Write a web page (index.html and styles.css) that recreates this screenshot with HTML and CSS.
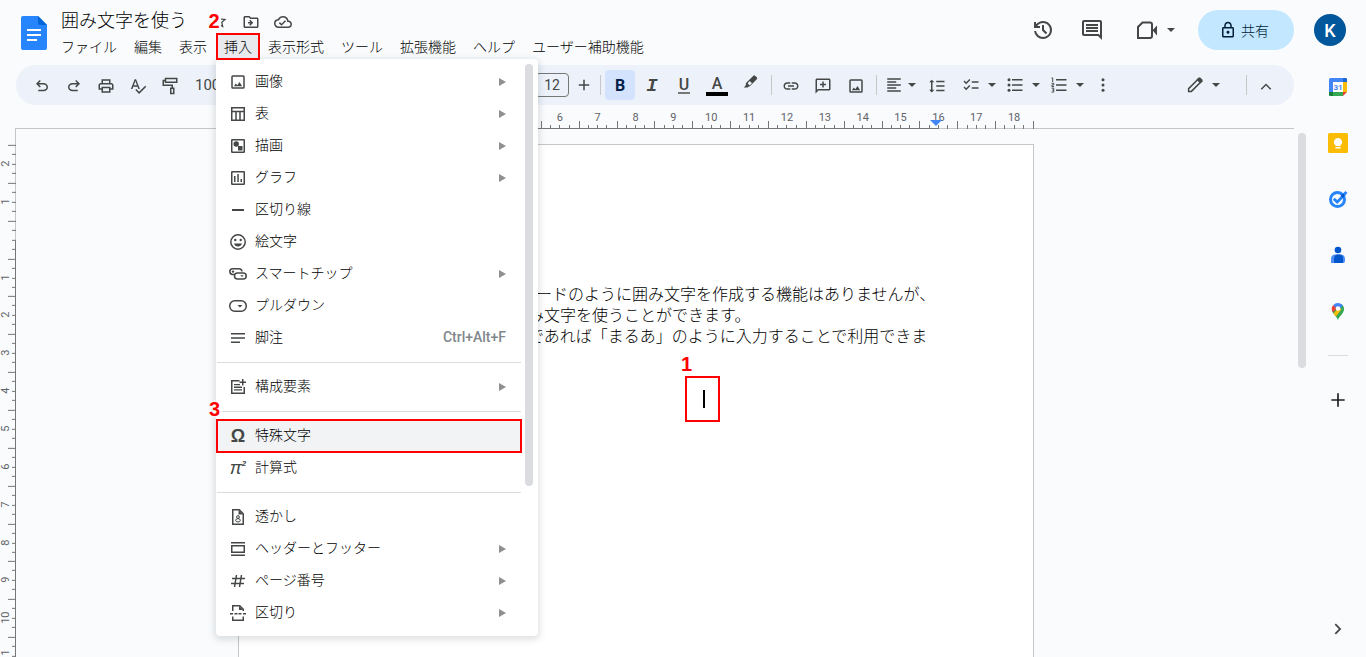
FILE: index.html
```html
<!DOCTYPE html>
<html lang="ja">
<head>
<meta charset="utf-8">
<meta name="viewport" content="width=device-width, initial-scale=1">
<title>囲み文字を使う</title>
<link rel="stylesheet" href="styles.css">
</head>
<body>
<svg class="sprite" aria-hidden="true">
  <symbol id="i-star" viewBox="0 0 24 24"><path d="M22 9.24l-7.19-.62L12 2 9.19 8.63 2 9.24l5.46 4.73L5.82 21 12 17.27 18.18 21l-1.63-7.03L22 9.24zM12 15.4l-3.76 2.27 1-4.28-3.32-2.88 4.38-.38L12 6.1l1.71 4.04 4.38.38-3.32 2.88 1 4.28L12 15.4z"/></symbol>
  <symbol id="i-move" viewBox="0 0 24 24"><path d="M20 6h-8l-2-2H4c-1.1 0-2 .9-2 2v12c0 1.1.9 2 2 2h16c1.1 0 2-.9 2-2V8c0-1.1-.9-2-2-2zm0 12H4V6h5.17l2 2H20v10zm-8.84-4H8v-2h3.16l-1.58-1.59L11 9l4 4-4 4-1.41-1.41L11.16 14z"/></symbol>
  <symbol id="i-cloud" viewBox="0 0 24 24"><path d="M19.35 10.04A7.49 7.49 0 0 0 12 4C9.11 4 6.6 5.64 5.35 8.04A5.994 5.994 0 0 0 0 14c0 3.31 2.69 6 6 6h13c2.76 0 5-2.24 5-5 0-2.64-2.05-4.78-4.65-4.96zM19 18H6c-2.21 0-4-1.79-4-4 0-2.05 1.53-3.76 3.56-3.97l1.07-.11.5-.95A5.469 5.469 0 0 1 12 6c2.62 0 4.88 1.86 5.39 4.43l.3 1.5 1.53.11A2.98 2.98 0 0 1 22 15c0 1.65-1.35 3-3 3zm-9-3.82l-2.09-2.09L6.5 13.5 10 17l6.01-6.01-1.41-1.41z"/></symbol>
  <symbol id="i-history" viewBox="0 -960 960 960"><path d="M480-120q-138 0-240.5-91.5T122-440h82q14 104 92.5 172T480-200q117 0 198.500-81.500T760-480q0-117-81.500-198.500T480-760q-69 0-129 32t-101 88h110v80H120v-240h80v94q51-64 124.500-99T480-840q75 0 140.500 28.500t114 77q48.500 48.500 77 114T840-480q0 75-28.500 140.500t-77 114q-48.500 48.500-114 77T480-120Zm112-192L440-464v-216h80v184l128 128-56 56Z"/></symbol>
  <symbol id="i-comment" viewBox="0 0 24 24"><path d="M21.990 4c0-1.100-.89-2-1.990-2H4c-1.100 0-2 .9-2 2v12c0 1.100.9 2 2 2h14l4 4-.01-18zM20 4v13.170L18.830 16H4V4h16zM6 12h12v2H6zm0-3h12v2H6zm0-3h12v2H6z"/></symbol>
  <symbol id="i-video" viewBox="0 0 24 24"><path fill="none" stroke="currentColor" stroke-width="2" d="M3 20V9l4.500-4.500H15a2 2 0 0 1 2 2V18a2 2 0 0 1-2 2z"/><path d="M17.500 12.200 22 7.500v10z"/></symbol>
  <symbol id="i-lock" viewBox="0 0 24 24"><path d="M18 8h-1V6c0-2.760-2.240-5-5-5S7 3.240 7 6v2H6c-1.100 0-2 .9-2 2v10c0 1.100.9 2 2 2h12c1.100 0 2-.9 2-2V10c0-1.100-.9-2-2-2zM9 6c0-1.660 1.340-3 3-3s3 1.340 3 3v2H9V6zm9 14H6V10h12v10zm-6-3c1.100 0 2-.9 2-2s-.9-2-2-2-2 .9-2 2 .9 2 2 2z"/></symbol>
  <symbol id="i-undo" viewBox="0 -960 960 960"><path d="M280-200v-80h284q63 0 109.500-40T720-420q0-60-46.500-100T564-560H312l104 104-56 56-200-200 200-200 56 56-104 104h252q97 0 166.500 63T800-420q0 94-69.500 157T564-200H280Z"/></symbol>
  <symbol id="i-print" viewBox="0 0 24 24"><path d="M19 8h-1V3H6v5H5c-1.660 0-3 1.340-3 3v6h4v4h12v-4h4v-6c0-1.660-1.340-3-3-3zM8 5h8v3H8V5zm8 12v2H8v-4h8v2zm2-2v-2H6v2H4v-4c0-.55.45-1 1-1h14c.55 0 1 .45 1 1v4h-2z"/></symbol>
  <symbol id="i-spell" viewBox="0 0 24 24"><path d="M12.450 16h2.090L9.430 3H7.570L2.460 16h2.090l1.120-3h5.640l1.140 3zm-6.020-5L8.500 5.480 10.570 11H6.430zm15.160.59l-8.090 8.090L9.830 16l-1.410 1.410 5.090 5.090L23 13l-1.410-1.410z"/></symbol>
  <symbol id="i-paint" viewBox="0 0 24 24"><g fill="none" stroke="currentColor" stroke-width="2"><rect x="6" y="2" width="15" height="5"/><path d="M6 4.500H3V11h12v4"/><rect x="13" y="15" width="4" height="7"/></g></symbol>
  <symbol id="i-plus" viewBox="0 0 24 24"><path d="M19 13h-6v6h-2v-6H5v-2h6V5h2v6h6z"/></symbol>
  <symbol id="i-marker" viewBox="0 0 24 24"><path fill-rule="evenodd" d="M19 2.500a2 2 0 0 0-2.800 0L7 11.500a2 2 0 0 0-.4 2.200l-.6 2L3.500 18H9l1-1.200a2 2 0 0 0 1.800-.6l9.200-9.100a2 2 0 0 0 0-2.800zM8.800 12.400l3-3 2.800 2.800-3.200 3z"/></symbol>
  <symbol id="i-link" viewBox="0 0 24 24"><path d="M3.900 12c0-1.710 1.390-3.100 3.100-3.100h4V7H7c-2.760 0-5 2.240-5 5s2.240 5 5 5h4v-1.900H7c-1.710 0-3.100-1.390-3.100-3.100zM8 13h8v-2H8v2zm9-6h-4v1.900h4c1.710 0 3.100 1.390 3.100 3.100s-1.390 3.100-3.100 3.100h-4V17h4c2.760 0 5-2.240 5-5s-2.240-5-5-5z"/></symbol>
  <symbol id="i-addcomment" viewBox="0 0 24 24"><path fill-rule="evenodd" d="M22 4c0-1.100-.9-2-2-2H4c-1.100 0-2 .9-2 2v18l4-4h14c1.100 0 2-.9 2-2V4zM4 4h16v12H5.170L4 17.170zM11 6h2v3h3v2h-3v3h-2v-3H8V9h3z"/></symbol>
  <symbol id="i-image" viewBox="0 0 24 24"><path fill-rule="evenodd" d="M5 3h14a2 2 0 0 1 2 2v14a2 2 0 0 1-2 2H5a2 2 0 0 1-2-2V5a2 2 0 0 1 2-2zm0 2v14h14V5zM6.500 17.500l2.500-3.500 2 2.200 3-4.200 3.500 5.500z"/></symbol>
  <symbol id="i-align" viewBox="0 0 24 24"><path d="M15 15H3v2h12v-2zm0-8H3v2h12V7zM3 13h18v-2H3v2zm0 8h18v-2H3v2zM3 3v2h18V3H3z"/></symbol>
  <symbol id="i-spacing" viewBox="0 0 24 24"><path d="M6 7h2.500L5 3.500 1.500 7H4v10H1.500L5 20.500 8.500 17H6V7zm5-2v2h11V5H11zm0 14h11v-2H11v2zm0-6h11v-2H11v2z"/></symbol>
  <symbol id="i-check" viewBox="0 0 24 24"><path d="M22 7h-9v2h9V7zm0 8h-9v2h9v-2zM5.540 11L2 7.460l1.410-1.410 2.120 2.120 4.240-4.240 1.410 1.410L5.540 11zm0 8L2 15.460l1.410-1.410 2.120 2.120 4.240-4.240 1.410 1.410L5.540 19z"/></symbol>
  <symbol id="i-bullets" viewBox="0 0 24 24"><circle cx="4" cy="5" r="2"/><circle cx="4" cy="12" r="2"/><circle cx="4" cy="19" r="2"/><path d="M8 4h14v2H8zM8 11h14v2H8zM8 18h14v2H8z"/></symbol>
  <symbol id="i-numbers" viewBox="0 0 24 24"><path fill="none" stroke="currentColor" stroke-width="1.300" d="M2 2.600h1.600V8M2 9.700h3v2.200H2.600v2.200H5.400M2 16.200h3v5.200H2M3 18.800h2"/><path d="M8 4h14v2H8zM8 11h14v2H8zM8 18h14v2H8z"/></symbol>
  <symbol id="i-more" viewBox="0 0 24 24"><circle cx="12" cy="5" r="2"/><circle cx="12" cy="12" r="2"/><circle cx="12" cy="19" r="2"/></symbol>
  <symbol id="i-pencil" viewBox="0 0 24 24"><path fill="none" stroke="currentColor" stroke-width="2" d="M3.500 20.500v-3.700L16.700 3.600a1 1 0 0 1 1.400 0l2.300 2.300a1 1 0 0 1 0 1.400L7.200 20.500z"/><path d="M14 5l3-3h2l3 3v2l-3 3z"/></symbol>
  <symbol id="i-up" viewBox="0 0 24 24"><path d="M5 15.500 12 8.500l7 7-1.400 1.400L12 11.300l-5.600 5.600z"/></symbol>
  <symbol id="i-right" viewBox="0 0 24 24"><path d="M9.500 5.500 16 12l-6.500 6.500L8 17l5-5-5-5z"/></symbol>
  <symbol id="i-caret" viewBox="0 0 8 4"><path d="M0 0h8L4 4z"/></symbol>
  <symbol id="i-table" viewBox="0 0 18 18"><path fill="none" stroke="currentColor" stroke-width="1.500" d="M2.750 2.750h12.500v12.500H2.750zM2.750 6.500h12.500M7 6.500v8.500M11 6.500v8.500"/></symbol>
  <symbol id="i-drawing" viewBox="0 0 18 18"><rect x="2.750" y="2.750" width="12.500" height="12.500" rx=".5" fill="none" stroke="currentColor" stroke-width="1.500"/><circle cx="7.200" cy="7" r="2.700"/><path d="M9 9h4.500v4.500H9z"/></symbol>
  <symbol id="i-chart" viewBox="0 0 18 18"><rect x="2.750" y="2.750" width="12.500" height="12.500" rx=".5" fill="none" stroke="currentColor" stroke-width="1.500"/><path d="M5 7h1.500v6H5zM8.300 5h1.500v8H8.300zM11.500 10H13v3h-1.500z"/></symbol>
  <symbol id="i-rule" viewBox="0 0 18 18"><path d="M3 8h12v2H3z"/></symbol>
  <symbol id="i-emoji" viewBox="0 0 18 18"><circle cx="9" cy="9" r="7.200" fill="none" stroke="currentColor" stroke-width="1.500"/><circle cx="6.300" cy="7" r="1.200"/><circle cx="11.700" cy="7" r="1.200"/><path d="M5 10.500h8a4.200 4.200 0 0 1-8 0z"/></symbol>
  <symbol id="i-chip" viewBox="0 0 18 18"><g fill="none" stroke="currentColor" stroke-width="1.500"><path d="M6 9.500H3.700a2.900 2.900 0 0 1 0-5.800H10a2.900 2.900 0 0 1 2.900 2.900"/><rect x="5.500" y="8" width="11.700" height="6" rx="3"/></g><circle cx="4" cy="6.600" r="1.200"/><path d="M11.300 10.200h3.400L13 12z"/></symbol>
  <symbol id="i-dropdown" viewBox="0 0 18 18"><rect x=".75" y="3.750" width="16.500" height="10.500" rx="5" fill="none" stroke="currentColor" stroke-width="1.500"/><path d="M8.500 8h5L11 10.500z"/></symbol>
  <symbol id="i-notes" viewBox="0 0 18 18"><path d="M2 4h14v1.500H2zM2 8.300h14v1.500H2zM2 12.500h9V14H2z"/></symbol>
  <symbol id="i-blocks" viewBox="0 0 18 18"><path fill="none" stroke="currentColor" stroke-width="1.500" d="M10.500 2.750H2.750v12.500h12.500V9"/><path d="M5 6h6v1.300H5zM5 8.600h8v1.300H5zM5 11.200h8v1.300H5zM13 1h1.500v2.500H17V5h-2.500v2.500H13V5h-2.500V3.500H13z"/></symbol>
  <symbol id="i-watermark" viewBox="0 0 18 18"><path fill="none" stroke="currentColor" stroke-width="1.500" d="M3.750 1.750h6.500l4 4v10.500H3.750z"/><path d="M9.500 2v4.500H14z"/><circle cx="9" cy="9" r="1.400" fill="none" stroke="currentColor"/><ellipse cx="9" cy="12.300" rx="2.300" ry="1.700" fill="none" stroke="currentColor"/></symbol>
  <symbol id="i-header" viewBox="0 0 18 18"><path d="M2 2h14v1.500H2zM2 14.500h14V16H2z"/><path fill="none" stroke="currentColor" stroke-width="1.500" d="M2.750 5.750h12.500v6.500H2.750z"/></symbol>
  <symbol id="i-hash" viewBox="0 0 18 18"><path fill="none" stroke="currentColor" stroke-width="1.500" d="M3 6.500h13M2 11.500h13M7.500 3l-2 12M12.500 3l-2 12"/></symbol>
  <symbol id="i-break" viewBox="0 0 18 18"><path fill="none" stroke="currentColor" stroke-width="1.500" d="M3.750 7V1.750h7l3.500 3.500V7M3.750 12.500v3.750h10.500V12.500M1 9.750h3M5.500 9.750h3M9.500 9.750h3M14 9.750h3"/><path d="M10 2v4h4z"/></symbol>
</svg>

<div class="app">
  <header class="header">
    <a class="logo" href="#" aria-label="ドキュメント ホーム">
      <svg width="26" height="34" viewBox="0 0 26 34"><path fill="#2684fc" d="M2 0h15l9 9v23a2 2 0 0 1-2 2H2a2 2 0 0 1-2-2V2a2 2 0 0 1 2-2z"/><path fill="#0066da" d="M17 0l9 9h-7a2 2 0 0 1-2-2z"/><path fill="#fff" d="M6 13h14v2H6zM6 18h14v2H6zM6 23h10v2H6z"/></svg>
    </a>
    <div class="heading">
      <div class="title-row">
        <h1 class="title">囲み文字を使う</h1>
        <button class="title-btn star" aria-label="スターを付ける"><svg class="ic"><use href="#i-star"/></svg><span class="callout callout-2">2</span></button>
        <button class="title-btn" aria-label="移動"><svg class="ic"><use href="#i-move"/></svg></button>
        <button class="title-btn" aria-label="保存済み"><svg class="ic"><use href="#i-cloud"/></svg></button>
      </div>
      <nav class="menubar">
        <button class="menubar-btn">ファイル</button>
        <button class="menubar-btn">編集</button>
        <button class="menubar-btn">表示</button>
        <div class="menu-host">
          <button class="menubar-btn open" aria-expanded="true">挿入</button>
          <div class="menu">
            <div class="menu-list" role="menu">
              <button class="item" role="menuitem"><svg class="ic"><use href="#i-image"/></svg><span class="label">画像</span><span class="arrow"></span></button>
              <button class="item" role="menuitem"><svg class="ic"><use href="#i-table"/></svg><span class="label">表</span><span class="arrow"></span></button>
              <button class="item" role="menuitem"><svg class="ic"><use href="#i-drawing"/></svg><span class="label">描画</span><span class="arrow"></span></button>
              <button class="item" role="menuitem"><svg class="ic"><use href="#i-chart"/></svg><span class="label">グラフ</span><span class="arrow"></span></button>
              <button class="item" role="menuitem"><svg class="ic"><use href="#i-rule"/></svg><span class="label">区切り線</span></button>
              <button class="item" role="menuitem"><svg class="ic"><use href="#i-emoji"/></svg><span class="label">絵文字</span></button>
              <button class="item" role="menuitem"><svg class="ic"><use href="#i-chip"/></svg><span class="label">スマートチップ</span><span class="arrow"></span></button>
              <button class="item" role="menuitem"><svg class="ic"><use href="#i-dropdown"/></svg><span class="label">プルダウン</span></button>
              <button class="item" role="menuitem"><svg class="ic"><use href="#i-notes"/></svg><span class="label">脚注</span><span class="shortcut">Ctrl+Alt+F</span></button>
              <hr class="rule">
              <button class="item" role="menuitem"><svg class="ic"><use href="#i-blocks"/></svg><span class="label">構成要素</span><span class="arrow"></span></button>
              <hr class="rule">
              <button class="item marked" role="menuitem"><span class="sym omega">Ω</span><span class="label">特殊文字</span><span class="callout callout-3">3</span></button>
              <button class="item" role="menuitem"><span class="sym pi">π<sup>2</sup></span><span class="label">計算式</span></button>
              <hr class="rule">
              <button class="item" role="menuitem"><svg class="ic"><use href="#i-watermark"/></svg><span class="label">透かし</span></button>
              <button class="item" role="menuitem"><svg class="ic"><use href="#i-header"/></svg><span class="label">ヘッダーとフッター</span><span class="arrow"></span></button>
              <button class="item" role="menuitem"><svg class="ic"><use href="#i-hash"/></svg><span class="label">ページ番号</span><span class="arrow"></span></button>
              <button class="item" role="menuitem"><svg class="ic"><use href="#i-break"/></svg><span class="label">区切り</span><span class="arrow"></span></button>
            </div>
            <div class="menu-scroll"></div>
          </div>
        </div>
        <button class="menubar-btn">表示形式</button>
        <button class="menubar-btn">ツール</button>
        <button class="menubar-btn">拡張機能</button>
        <button class="menubar-btn">ヘルプ</button>
        <button class="menubar-btn">ユーザー補助機能</button>
      </nav>
    </div>
    <div class="actions">
      <button class="action" aria-label="変更履歴"><svg class="ic big"><use href="#i-history"/></svg></button>
      <button class="action" aria-label="コメント"><svg class="ic big"><use href="#i-comment"/></svg></button>
      <button class="action" aria-label="会議"><svg class="ic big"><use href="#i-video"/></svg><svg class="caret"><use href="#i-caret"/></svg></button>
      <button class="share"><svg class="ic"><use href="#i-lock"/></svg>共有</button>
      <button class="avatar">K</button>
    </div>
  </header>

  <main class="editor">
    <div class="toolbar" role="toolbar">
      <button class="tool" aria-label="元に戻す"><svg class="ic"><use href="#i-undo"/></svg></button>
      <button class="tool" aria-label="やり直し"><svg class="ic flip"><use href="#i-undo"/></svg></button>
      <button class="tool" aria-label="印刷"><svg class="ic"><use href="#i-print"/></svg></button>
      <button class="tool" aria-label="スペルチェック"><svg class="ic"><use href="#i-spell"/></svg></button>
      <button class="tool" aria-label="書式の貼り付け"><svg class="ic"><use href="#i-paint"/></svg></button>
      <button class="zoom-level">100%</button>
      <input class="font-size" type="text" value="12" aria-label="フォントサイズ">
      <button class="tool narrow" aria-label="拡大"><svg class="ic"><use href="#i-plus"/></svg></button>
      <span class="sep"></span>
      <button class="tool glyph active" aria-label="太字"><b>B</b></button>
      <button class="tool glyph" aria-label="斜体"><i>I</i></button>
      <button class="tool glyph" aria-label="下線"><span class="underlined">U</span></button>
      <button class="tool wide glyph" aria-label="テキストの色"><span class="colored">A</span></button>
      <button class="tool wide raised" aria-label="ハイライト"><svg class="ic"><use href="#i-marker"/></svg></button>
      <span class="sep"></span>
      <button class="tool" aria-label="リンク"><svg class="ic"><use href="#i-link"/></svg></button>
      <button class="tool" aria-label="コメントを追加"><svg class="ic"><use href="#i-addcomment"/></svg></button>
      <button class="tool wide" aria-label="画像を挿入"><svg class="ic"><use href="#i-image"/></svg></button>
      <span class="sep"></span>
      <button class="split tight" aria-label="配置"><svg class="ic"><use href="#i-align"/></svg><svg class="caret"><use href="#i-caret"/></svg></button>
      <button class="tool" aria-label="行間隔"><svg class="ic"><use href="#i-spacing"/></svg></button>
      <button class="split spaced" aria-label="チェックリスト"><svg class="ic"><use href="#i-check"/></svg><svg class="caret"><use href="#i-caret"/></svg></button>
      <button class="split" aria-label="箇条書き"><svg class="ic"><use href="#i-bullets"/></svg><svg class="caret"><use href="#i-caret"/></svg></button>
      <button class="split" aria-label="番号付きリスト"><svg class="ic"><use href="#i-numbers"/></svg><svg class="caret"><use href="#i-caret"/></svg></button>
      <button class="tool narrow" aria-label="その他"><svg class="ic"><use href="#i-more"/></svg></button>
      <div class="toolbar-end">
        <button class="split" aria-label="編集モード"><svg class="ic"><use href="#i-pencil"/></svg><svg class="caret"><use href="#i-caret"/></svg></button>
        <span class="sep"></span>
        <button class="tool" aria-label="メニューを隠す"><svg class="ic"><use href="#i-up"/></svg></button>
      </div>
    </div>

    <div class="h-ruler">
      <div class="h-scale">
        <span></span><span></span><span></span><span></span><span></span><span></span><span></span><span></span><span>6</span><span>7</span><span>8</span><span>9</span><span>10</span><span>11</span><span>12</span><span>13</span><span>14</span><span>15</span><span>16</span><span>17</span><span>18</span>
        <div class="h-active"></div>
        <svg class="indent" viewBox="0 0 12 6"><path d="M0 0h12L6 6z"/></svg>
      </div>
    </div>

    <div class="workspace">
      <div class="v-ruler">
        <div class="v-scale">
          <span>2</span><span>1</span><span></span><span>1</span><span>2</span><span>3</span><span>4</span><span>5</span><span>6</span><span>7</span><span>8</span><span>9</span><span>10</span><span>11</span>
        </div>
      </div>
      <div class="canvas">
        <article class="page">
          <p class="line first">ードのように囲み文字を作成する機能はありませんが、</p>
          <p class="line">み文字を使うことができます。</p>
          <p class="line">であれば「まるあ」のように入力することで利用できま</p>
          <div class="cursor-box"><span class="callout callout-1">1</span><span class="cursor"></span></div>
        </article>
      </div>
      <div class="page-scroll"></div>
    </div>
  </main>

  <aside class="side">
    <button class="side-btn" aria-label="カレンダー"><svg viewBox="0 0 20 20"><rect x="1" y="1" width="18" height="18" rx="1.500" fill="#4285f4"/><path fill="#1967d2" d="M15 1h2.500A1.500 1.500 0 0 1 19 2.500V5h-4z"/><path fill="#fbbc04" d="M15 5h4v10h-4z"/><path fill="#34a853" d="M5 15h10v4H5z"/><path fill="#188038" d="M1 15h4v4H2.500A1.500 1.500 0 0 1 1 17.500z"/><path fill="#fafbfd" d="M15 15h4v4h-4z"/><path fill="#ea4335" d="M15 15h4l-4 4z"/><path fill="#fff" d="M5 5h10v10H5z"/><text x="10" y="13" text-anchor="middle" class="cal-day">31</text></svg></button>
    <button class="side-btn" aria-label="Keep"><svg viewBox="0 0 20 20"><rect width="20" height="20" rx="1.500" fill="#fbbc04"/><path fill="#fff" d="M10 5a4 4 0 0 1 2.500 7.200V13h-5v-.8A4 4 0 0 1 10 5zM7.500 14h5v1.500h-5z"/></svg></button>
    <button class="side-btn" aria-label="ToDo リスト"><svg viewBox="0 0 20 20"><circle cx="9.500" cy="10.500" r="7" fill="none" stroke="#2684fc" stroke-width="3"/><path fill="none" stroke="#2684fc" stroke-width="2.800" d="M5.800 9.800l3.400 3.300 5-5"/><path fill="none" stroke="#0057cc" stroke-width="3" d="M13.500 8l3-3"/><path fill="none" stroke="#2684fc" stroke-width="3" d="M16 5.500 18.500 3"/></svg></button>
    <button class="side-btn" aria-label="連絡先"><svg viewBox="0 0 20 20"><circle cx="10" cy="5" r="3.300" fill="#0057cc"/><path fill="#4f8df6" d="M3 18v-4a4.500 4.500 0 0 1 4-4.500h6a4.500 4.500 0 0 1 4 4.500v2a2 2 0 0 1-2 2z"/><path fill="#0057cc" d="M6 18v-5a4 4 0 0 1 3-3.500h3a4 4 0 0 1 3 4V18z"/></svg></button>
    <button class="side-btn" aria-label="マップ"><svg viewBox="0 0 20 20"><path fill="#34a853" d="M10 19c-1-3-5-6-6-9l10-6.500A6.200 6.200 0 0 1 16 8c0 5-5 7-6 11z"/><path fill="#fbbc04" d="M5.500 12.500 12 5l1 4-5 6.500z"/><path fill="#ea4335" d="M5.300 4A6 6 0 0 0 5 11.500L9 7z"/><path fill="#4285f4" d="M5.300 4a6.200 6.200 0 0 1 9.700.5L11.500 8 8 7z"/><circle cx="10" cy="7.500" r="2.300" fill="#fff"/></svg></button>
    <hr class="side-rule">
    <button class="side-btn add" aria-label="アドオンを取得"><svg viewBox="0 0 24 24"><path d="M20 13h-7v7h-2v-7H4v-2h7V4h2v7h7z"/></svg></button>
    <button class="side-btn collapse" aria-label="サイドパネルを隠す"><svg class="ic"><use href="#i-right"/></svg></button>
  </aside>
</div>
</body>
</html>
```

FILE: styles.css
```css
* { box-sizing: border-box; }

body {
  margin: 0;
  background: #f9fbfd;
  color: #000;
  font-family: Roboto, "Noto Sans CJK JP", sans-serif;
  font-size: 14px;
  font-weight: 300;
}

button {
  display: flex;
  align-items: center;
  justify-content: center;
  margin: 0;
  padding: 0;
  border: 0;
  background: none;
  color: #444746;
  font: inherit;
  white-space: nowrap;
}

svg { fill: currentColor; flex: none; display: block; }
.sprite { position: absolute; width: 0; height: 0; }
.ic { width: 18px; height: 18px; }
.ic.big { width: 24px; height: 24px; }
.caret { width: 8px; height: 4px; }
.flip { transform: scaleX(-1); }

.app {
  display: grid;
  grid-template-columns: minmax(0, 1fr) 56px;
  grid-template-rows: 65px minmax(0, 1fr);
  height: 100vh;
  overflow: hidden;
}

/* Header */
.header {
  grid-column: 1 / -1;
  display: flex;
  align-items: flex-start;
  padding: 0 20px 0 21px;
}
.logo { padding-top: 16px; }
.heading { flex: 1; padding: 7px 0 0 6px; }
.title-row { display: flex; align-items: center; height: 26px; padding-left: 8px; gap: 14px; }
.title { margin: 0; padding-top: 2px; font-size: 18px; line-height: 24px; font-weight: 300; }
.title-btn { height: 26px; padding-top: 4px; }
.star { position: relative; margin-left: 9px; }
.star .ic { margin-top: -2px; }
.menubar { display: flex; align-items: center; gap: 1px; }
.menubar-btn { height: 27px; padding: 0 8px; color: #000; line-height: 20px; }
.menu-host { position: relative; margin-right: -1px; }
.menubar-btn.open {
  position: relative;
  z-index: 12;
  padding: 0 6px;
  border: 2px solid #f00;
  background: #e8eaed;
}

.actions { display: flex; align-items: center; height: 60px; }
.action { height: 40px; gap: 8px; margin-right: 25px; }
.action:nth-child(2) { margin-right: 31px; }
.action:nth-child(3) { margin-right: 23px; }
.share {
  width: 96px;
  height: 40px;
  gap: 4px;
  padding-right: 4px;
  border-radius: 20px;
  background: #c2e7ff;
  color: #001d35;
}
.avatar {
  width: 32px;
  height: 32px;
  margin-left: 20px;
  border-radius: 16px;
  background: #01579b;
  color: #fff;
  font-size: 18px;
  font-weight: 500;
}

/* Insert menu */
.menu {
  position: absolute;
  z-index: 10;
  top: 26px;
  left: 0;
  display: flex;
  gap: 4px;
  width: 322px;
  padding: 7px 5px 7px 1px;
  border-radius: 4px;
  background: #fff;
  box-shadow: 0 2px 6px 2px rgba(60, 64, 67, .15);
}
.menu-list { flex: 1; }
.menu-scroll { width: 8px; height: 422px; margin-top: -2px; border-radius: 4px; background: #dadce0; }
.item {
  position: relative;
  justify-content: flex-start;
  width: 100%;
  height: 32px;
  padding: 0 15px 0 12px;
}
.label { flex: 1; padding: 0 0 4px 8px; color: #000; text-align: left; }
.arrow { border: 4px solid transparent; border-left: 7px solid #8f8f8f; border-right: 0; }
.shortcut { padding-bottom: 2px; color: #80868b; font-weight: 500; }
.rule { height: 1px; margin: 8px 0; border: 0; background: #dadce0; }
.marked { background: #f1f3f4; outline: 2px solid #f00; outline-offset: -1px; }
.sym { width: 18px; text-align: center; font-family: "Liberation Sans", sans-serif; }
.omega { font-size: 18px; font-weight: 700; }
.pi { font-size: 18px; font-weight: 400; font-style: italic; line-height: 18px; }
.pi sup { font-size: 8px; font-weight: 700; line-height: 8px; vertical-align: 8px; }

/* Step markers */
.callout {
  position: absolute;
  color: #f00;
  font: 700 20px/20px "Liberation Sans", Arial, sans-serif;
}
.callout-1 { left: -6px; top: -24px; }
.callout-2 { left: -3px; top: 4px; width: 14px; background: #f9fbfd; }
.callout-3 { left: -8px; top: -21px; text-shadow: 0 0 2px #fff, 2px 0 2px #fff, 2px 0 2px #fff; }

/* Toolbar */
.editor { display: flex; flex-direction: column; min-width: 0; min-height: 0; }
.toolbar {
  display: flex;
  align-items: center;
  gap: 2px;
  flex: none;
  height: 40px;
  margin: 0 16px;
  padding: 0 13px 0 11px;
  border-radius: 20px;
  background: #edf2fa;
}
.tool { flex: none; width: 30px; height: 30px; padding-top: 2px; border-radius: 4px; }
.tool.narrow { width: 25px; padding-top: 0; }
.tool.wide { width: 32px; }
.tool.raised { padding: 0 2px 4px 0; }
.tool.active { background: #d3e3fd; color: #041e49; }
.zoom-level { flex: none; width: 346px; justify-content: flex-start; padding-left: 8px; font-size: 15px; font-weight: 400; }
.font-size {
  flex: none;
  width: 34px;
  height: 24px;
  padding: 0;
  border: 1px solid #747775;
  border-radius: 4px;
  background: transparent;
  color: #444746;
  font: 400 14px Roboto, sans-serif;
  text-align: center;
}
.sep { flex: none; width: 1px; height: 20px; margin: 0 2px; background: #c7c7c7; }
.glyph { font-size: 16px; font-weight: 500; line-height: 16px; }
.glyph b { font-weight: 700; }
.glyph i { font: italic 700 19px/19px "Liberation Mono", monospace; }
.underlined { width: 12px; border-bottom: 2px solid #747775; line-height: 14px; }
.colored { width: 22px; border-bottom: 4px solid #000; line-height: 16px; }
.split { flex: none; height: 30px; padding: 0 4px; gap: 8px; }
.split.tight { gap: 5px; }
.split.spaced { margin-left: 4px; }
.toolbar-end { display: flex; align-items: center; gap: 2px; margin-left: auto; }
.toolbar-end .sep { margin-left: 20px; }

/* Rulers */
.h-ruler {
  flex: none;
  display: flex;
  justify-content: center;
  height: 24px;
  margin: 0 16px 0 15px;
  padding-right: 37px;
  border-bottom: 1px solid #c4c7c5;
}
.h-scale { position: relative; display: flex; flex: none; width: 796px; height: 24px; }
.h-scale span {
  flex: 1;
  text-align: center;
  color: #5f6368;
  font: 400 11px/16px Roboto, sans-serif;
  padding-top: 5px;
  background:
    linear-gradient(#747775, #747775) 0 100% / 1px 8px no-repeat,
    linear-gradient(#747775, #747775) 25% 100% / 1px 4px no-repeat,
    linear-gradient(#747775, #747775) 50% 100% / 1px 4px no-repeat,
    linear-gradient(#747775, #747775) 75% 100% / 1px 4px no-repeat;
}
.h-scale::after { content: ""; width: 1px; height: 8px; align-self: flex-end; background: #747775; }
.h-active { position: absolute; left: 95px; right: 95px; bottom: 0; height: 1px; background: #747775; }
.indent { position: absolute; right: 92px; bottom: 3px; width: 12px; height: 6px; fill: #4285f4; }

.workspace { position: relative; flex: 1; display: flex; min-height: 0; overflow: hidden; }
.v-ruler {
  flex: none;
  width: 16px;
  padding-top: 16px;
  overflow: hidden;
  background: linear-gradient(#c4c7c5 112px, #747775 112px) 15px 0 / 1px 100% no-repeat;
}
.v-scale { display: flex; flex-direction: column; height: 530px; }
.v-scale span {
  flex: 1;
  writing-mode: vertical-rl;
  transform: rotate(180deg);
  text-align: center;
  color: #5f6368;
  font: 400 11px/12px Roboto, sans-serif;
  background:
    linear-gradient(#747775, #747775) 0 100% / 8px 1px no-repeat,
    linear-gradient(#747775, #747775) 0 25% / 4px 1px no-repeat,
    linear-gradient(#747775, #747775) 0 50% / 4px 1px no-repeat,
    linear-gradient(#747775, #747775) 0 75% / 4px 1px no-repeat;
}

/* Document */
.canvas { flex: 1; display: flex; justify-content: center; padding: 15px 54px 0 0; }
.page {
  flex: none;
  width: 796px;
  padding: 138px 94px 0 289px;
  border: 1px solid #c4c7c5;
  border-bottom: 0;
  background: #fff;
}
.line { margin: 0; font: 300 16px/21px "Noto Sans CJK JP", sans-serif; white-space: nowrap; }
.line.first { text-indent: 8px; }
.cursor-box {
  position: relative;
  display: flex;
  align-items: center;
  justify-content: center;
  width: 35px;
  height: 46px;
  margin: 30px 0 0 157px;
  padding-left: 3px;
  border: 2px solid #f00;
}
.cursor { width: 2px; height: 18px; background: #000; }
.page-scroll {
  position: absolute;
  top: 4px;
  right: 4px;
  width: 8px;
  height: 235px;
  border-radius: 4px;
  background: #dadce0;
}

/* Side panel */
.side { display: flex; flex-direction: column; align-items: center; gap: 36px; padding: 12px 0 18px; }
.side-btn { width: 20px; height: 20px; }
.side-btn svg { width: 20px; height: 20px; }
.cal-day { font: 700 8px Roboto, sans-serif; fill: #4285f4; }
.side-rule { width: 20px; height: 1px; margin: -2px 0; border: 0; background: #dadce0; }
.side-btn.add { color: #1f1f1f; }
.side-btn.collapse { margin-top: auto; }
```
